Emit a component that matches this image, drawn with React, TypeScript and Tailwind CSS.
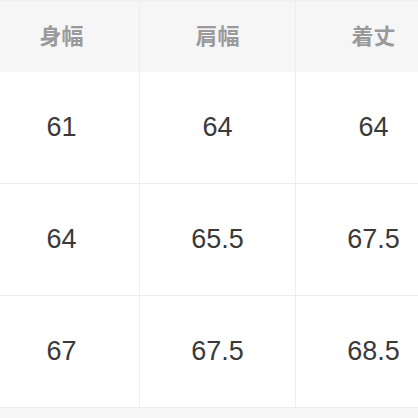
const headers = ['身幅', '肩幅', '着丈']

const rows = [
  ['61', '64', '64'],
  ['64', '65.5', '67.5'],
  ['67', '67.5', '68.5'],
]

const App = () => {
  return (
    <div className="w-[418px] h-[418px] overflow-hidden bg-[#f6f6f6]">
      <div className="h-[2px] bg-[#f0f0f0]" />
      <div className="ml-[-16px] w-[468px] grid grid-cols-[156px_156px_156px]">
        {headers.map((h) => (
          <div
            key={h}
            className="h-[70px] pb-[5px] flex items-center justify-center bg-[#f6f6f6] border-r border-[#ededed] text-[22px] font-bold text-[#9a9a9a] [font-family:'Noto_Sans_CJK_JP',sans-serif]"
          >
            {h}
          </div>
        ))}
        {rows.map((row, i) =>
          row.map((v, j) => (
            <div
              key={`${i}-${j}`}
              className="h-[112px] flex items-center justify-center bg-white border-r border-b border-[#eeeeee] text-[27px] text-[#3a3a3a] [font-family:'Liberation_Sans',Arial,sans-serif]"
            >
              {v}
            </div>
          )),
        )}
      </div>
    </div>
  )
}

export default App
